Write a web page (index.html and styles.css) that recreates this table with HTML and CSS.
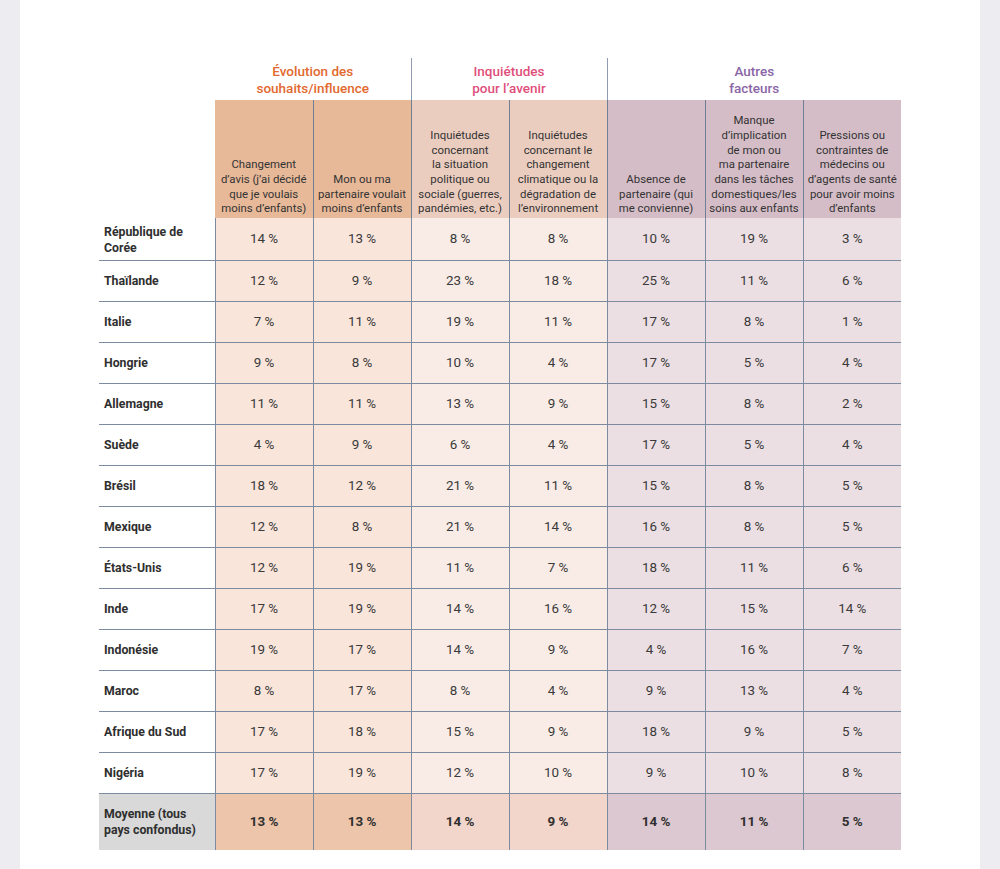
FILE: index.html
```html
<!DOCTYPE html>
<html lang="fr">
<head>
<meta charset="utf-8">
<link rel="stylesheet" href="styles.css">
</head>
<body>
<div class="card">
<table class="tbl">
<colgroup>
<col class="c-country"><col class="c-data"><col class="c-data"><col class="c-data"><col class="c-data"><col class="c-data"><col class="c-data"><col class="c-data">
</colgroup>
<thead>
<tr class="groups">
<th class="blank"></th>
<th colspan="2" class="grp g1t">Évolution des<br>souhaits/influence</th>
<th colspan="2" class="grp g2t sep">Inquiétudes<br>pour l’avenir</th>
<th colspan="3" class="grp g3t sep">Autres<br>facteurs</th>
</tr>
<tr class="heads">
<th class="blank"></th>
<th class="h g1h">Changement<br>d’avis (j’ai décidé<br>que je voulais<br>moins d’enfants)</th>
<th class="h g1h vl">Mon ou ma<br>partenaire voulait<br>moins d’enfants</th>
<th class="h g2h vl">Inquiétudes<br>concernant<br>la situation<br>politique ou<br>sociale (guerres,<br>pandémies, etc.)</th>
<th class="h g2h vl">Inquiétudes<br>concernant le<br>changement<br>climatique ou la<br>dégradation de<br>l’environnement</th>
<th class="h g3h vl">Absence de<br>partenaire (qui<br>me convienne)</th>
<th class="h g3h vl">Manque<br>d’implication<br>de mon ou<br>ma partenaire<br>dans les tâches<br>domestiques/les<br>soins aux enfants</th>
<th class="h g3h vl">Pressions ou<br>contraintes de<br>médecins ou<br>d’agents de santé<br>pour avoir moins<br>d’enfants</th>
</tr>
</thead>
<tbody>
<tr class="tall"><th class="cty first">République de Corée</th><td class="g1">14 %</td><td class="g1">13 %</td><td class="g2">8 %</td><td class="g2">8 %</td><td class="g3">10 %</td><td class="g3">19 %</td><td class="g3">3 %</td></tr>
<tr><th class="cty">Thaïlande</th><td class="g1">12 %</td><td class="g1">9 %</td><td class="g2">23 %</td><td class="g2">18 %</td><td class="g3">25 %</td><td class="g3">11 %</td><td class="g3">6 %</td></tr>
<tr><th class="cty">Italie</th><td class="g1">7 %</td><td class="g1">11 %</td><td class="g2">19 %</td><td class="g2">11 %</td><td class="g3">17 %</td><td class="g3">8 %</td><td class="g3">1 %</td></tr>
<tr><th class="cty">Hongrie</th><td class="g1">9 %</td><td class="g1">8 %</td><td class="g2">10 %</td><td class="g2">4 %</td><td class="g3">17 %</td><td class="g3">5 %</td><td class="g3">4 %</td></tr>
<tr><th class="cty">Allemagne</th><td class="g1">11 %</td><td class="g1">11 %</td><td class="g2">13 %</td><td class="g2">9 %</td><td class="g3">15 %</td><td class="g3">8 %</td><td class="g3">2 %</td></tr>
<tr><th class="cty">Suède</th><td class="g1">4 %</td><td class="g1">9 %</td><td class="g2">6 %</td><td class="g2">4 %</td><td class="g3">17 %</td><td class="g3">5 %</td><td class="g3">4 %</td></tr>
<tr><th class="cty">Brésil</th><td class="g1">18 %</td><td class="g1">12 %</td><td class="g2">21 %</td><td class="g2">11 %</td><td class="g3">15 %</td><td class="g3">8 %</td><td class="g3">5 %</td></tr>
<tr><th class="cty">Mexique</th><td class="g1">12 %</td><td class="g1">8 %</td><td class="g2">21 %</td><td class="g2">14 %</td><td class="g3">16 %</td><td class="g3">8 %</td><td class="g3">5 %</td></tr>
<tr><th class="cty">États-Unis</th><td class="g1">12 %</td><td class="g1">19 %</td><td class="g2">11 %</td><td class="g2">7 %</td><td class="g3">18 %</td><td class="g3">11 %</td><td class="g3">6 %</td></tr>
<tr><th class="cty">Inde</th><td class="g1">17 %</td><td class="g1">19 %</td><td class="g2">14 %</td><td class="g2">16 %</td><td class="g3">12 %</td><td class="g3">15 %</td><td class="g3">14 %</td></tr>
<tr><th class="cty">Indonésie</th><td class="g1">19 %</td><td class="g1">17 %</td><td class="g2">14 %</td><td class="g2">9 %</td><td class="g3">4 %</td><td class="g3">16 %</td><td class="g3">7 %</td></tr>
<tr><th class="cty">Maroc</th><td class="g1">8 %</td><td class="g1">17 %</td><td class="g2">8 %</td><td class="g2">4 %</td><td class="g3">9 %</td><td class="g3">13 %</td><td class="g3">4 %</td></tr>
<tr><th class="cty">Afrique du Sud</th><td class="g1">17 %</td><td class="g1">18 %</td><td class="g2">15 %</td><td class="g2">9 %</td><td class="g3">18 %</td><td class="g3">9 %</td><td class="g3">5 %</td></tr>
<tr><th class="cty">Nigéria</th><td class="g1">17 %</td><td class="g1">19 %</td><td class="g2">12 %</td><td class="g2">10 %</td><td class="g3">9 %</td><td class="g3">10 %</td><td class="g3">8 %</td></tr>
<tr class="avg"><th class="cty avgl">Moyenne (tous pays confondus)</th><td class="a1">13 %</td><td class="a1">13 %</td><td class="a2">14 %</td><td class="a2">9 %</td><td class="a3">14 %</td><td class="a3">11 %</td><td class="a3">5 %</td></tr>
</tbody>
</table>
</div>
</body>
</html>
```
FILE: styles.css
```css
html, body {
  margin: 0;
  padding: 0;
}
body {
  background: #ededf1;
  font-family: Roboto, "Liberation Sans", Arial, sans-serif;
  color: #333;
}
.card {
  background: #fff;
  margin: 0 20px;
  min-height: 869px;
  padding: 58px 0 0 79px;
  box-sizing: border-box;
}
.tbl {
  border-collapse: collapse;
  table-layout: fixed;
  width: 802px;
}
.c-country { width: 116px; }
.c-data { width: 98px; }

.groups th {
  height: 39px;
  padding: 0 0 3px;
  font-weight: 500;
  font-size: 13.5px;
  line-height: 17px;
  vertical-align: bottom;
  text-align: center;
}
.g1t { color: #e2692f; }
.g2t { color: #df4f7c; }
.g3t { color: #8a66a6; }
.sep { border-left: 1px solid #8f9bb0; }

.heads th.h {
  height: 118px;
  padding: 0 0 2px;
  font-weight: 400;
  font-size: 11.4px;
  line-height: 14.65px;
  color: #333;
  vertical-align: bottom;
  text-align: center;
  white-space: nowrap;
  box-sizing: border-box;
}
.vl { border-left: 1px solid #6f7f95; }
.g1h { background: #e7b999; }
.g2h { background: #ebcdc0; }
.g3h { background: #d5bdc7; }

tbody tr { height: 41px; }
tbody tr.tall { height: 42px; }
tbody tr + tr { border-top: 1px solid #7d8ba0; }
tbody tr.avg { height: 57px; }

.cty {
  text-align: left;
  font-weight: 700;
  font-size: 12.3px;
  line-height: 16px;
  color: #2f2f2f;
  padding: 0 4px 0 5px;
  background: #fff;
}
.cty.first { padding-top: 3px; }
tbody td {
  text-align: center;
  font-size: 13.4px;
  color: #3a3a3a;
  border-left: 1px solid #7d8ba0;
  padding: 0;
}
.g1 { background: #f9e5da; }
.g2 { background: #f9ece7; }
.g3 { background: #ebdfe3; }
.avg td { font-weight: 700; color: #2f2f2f; }
.a1 { background: #ecc5ab; }
.a2 { background: #f2d5cb; }
.a3 { background: #dcc8d0; }
.avgl { background: #d9d9d9; }
```
